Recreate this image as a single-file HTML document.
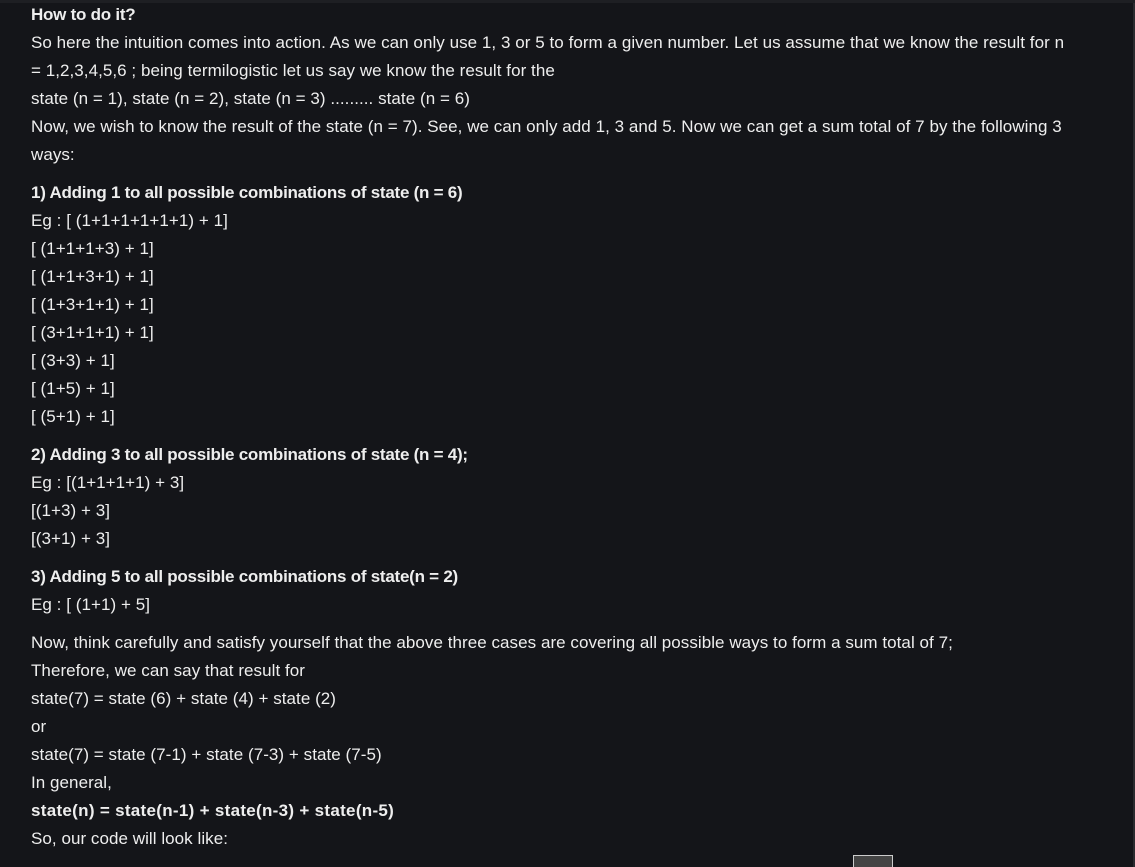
<!DOCTYPE html>
<html><head><meta charset="utf-8"><style>
html,body{margin:0;padding:0;background:#141519;width:1135px;height:867px;overflow:hidden}
body{border-top:3px solid #1e1f23;box-sizing:border-box;position:relative}
.c{position:absolute;left:31px;top:-2px;color:#eeeeee;font-family:"Liberation Sans",sans-serif;font-size:17px;letter-spacing:0.05px;line-height:28px;white-space:nowrap}
.c div{height:28px}
.g{margin-top:10px}
b{font-weight:bold;letter-spacing:-0.25px}
b.w{letter-spacing:0.3px}
.rb{position:absolute;right:0;top:0;width:2px;height:867px;background:#2a2b2f}
.box{position:absolute;left:853px;top:852px;width:38px;height:20px;background:#444;border:1px solid #ccc}
</style></head><body>
<div class="c">
<div><b>How to do it?</b></div>
<div>So here the intuition comes into action. As we can only use 1, 3 or 5 to form a given number. Let us assume that we know the result for n</div>
<div>= 1,2,3,4,5,6 ; being termilogistic let us say we know the result for the</div>
<div>state (n = 1), state (n = 2), state (n = 3) ......... state (n = 6)</div>
<div>Now, we wish to know the result of the state (n = 7). See, we can only add 1, 3 and 5. Now we can get a sum total of 7 by the following 3</div>
<div>ways:</div>
<div class="g"><b>1) Adding 1 to all possible combinations of state (n = 6)</b></div>
<div>Eg : [ (1+1+1+1+1+1) + 1]</div>
<div>[ (1+1+1+3) + 1]</div>
<div>[ (1+1+3+1) + 1]</div>
<div>[ (1+3+1+1) + 1]</div>
<div>[ (3+1+1+1) + 1]</div>
<div>[ (3+3) + 1]</div>
<div>[ (1+5) + 1]</div>
<div>[ (5+1) + 1]</div>
<div class="g"><b>2) Adding 3 to all possible combinations of state (n = 4);</b></div>
<div>Eg : [(1+1+1+1) + 3]</div>
<div>[(1+3) + 3]</div>
<div>[(3+1) + 3]</div>
<div class="g"><b>3) Adding 5 to all possible combinations of state(n = 2)</b></div>
<div>Eg : [ (1+1) + 5]</div>
<div class="g">Now, think carefully and satisfy yourself that the above three cases are covering all possible ways to form a sum total of 7;</div>
<div>Therefore, we can say that result for</div>
<div>state(7) = state (6) + state (4) + state (2)</div>
<div>or</div>
<div>state(7) = state (7-1) + state (7-3) + state (7-5)</div>
<div>In general,</div>
<div><b class="w">state(n) = state(n-1) + state(n-3) + state(n-5)</b></div>
<div>So, our code will look like:</div>
</div>
<div class="rb"></div>
<div class="box"></div>
</body></html>
